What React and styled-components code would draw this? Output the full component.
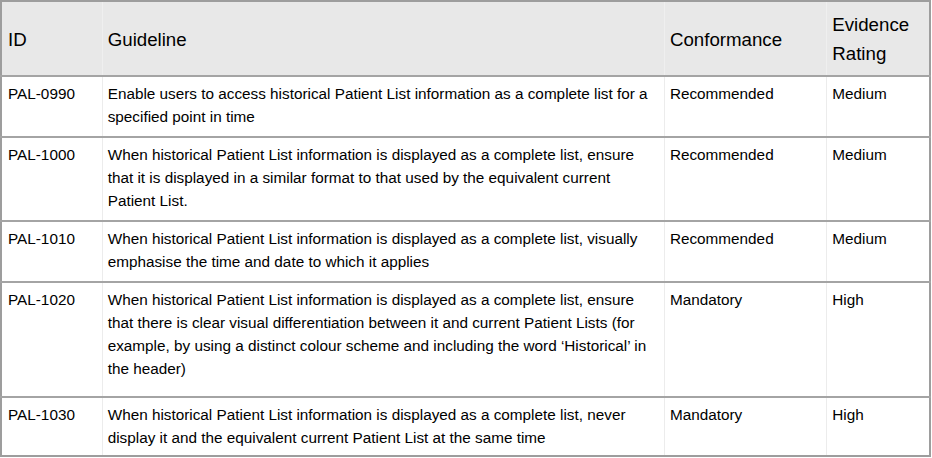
import React from "react";
import styled, { createGlobalStyle } from "styled-components";

const Global = createGlobalStyle`
  html, body { margin: 0; padding: 0; background: #ffffff; }
  body { font-family: "Liberation Sans", Arial, sans-serif; color: #000; }
`;

const Table = styled.table`
  width: 931px;
  border-collapse: collapse;
  border: 2px solid #9d9d9d;
  table-layout: fixed;
`;

const HeadCell = styled.th`
  background: #e8e8e8;
  font-weight: normal;
  font-size: 18.7px;
  line-height: 29px;
  text-align: left;
  vertical-align: middle;
  padding: 8px 6px 7px 5px;
  height: 58px;
  border-bottom: 2px solid #a4a4a4;
  border-left: 1px solid #efefef;
  &:first-child { border-left: none; padding-left: 6px; }
`;

const Cell = styled.td`
  font-size: 15.3px;
  line-height: 23px;
  vertical-align: top;
  padding: 5px 6px ${(p) => p.$pb}px 5px;
  border-top: 2px solid #a4a4a4;
  border-left: 1px solid #ececec;
  &:first-child { border-left: none; padding-left: 6px; }
`;

const Col = styled.col`
  width: ${(p) => p.$w}px;
`;

const rows = [
  {
    id: "PAL-0990",
    text: "Enable users to access historical Patient List information as a complete list for a specified point in time",
    conf: "Recommended",
    rating: "Medium",
    pb: 8,
  },
  {
    id: "PAL-1000",
    text: "When historical Patient List information is displayed as a complete list, ensure that it is displayed in a similar format to that used by the equivalent current Patient List.",
    conf: "Recommended",
    rating: "Medium",
    pb: 8,
  },
  {
    id: "PAL-1010",
    text: "When historical Patient List information is displayed as a complete list, visually emphasise the time and date to which it applies",
    conf: "Recommended",
    rating: "Medium",
    pb: 8,
  },
  {
    id: "PAL-1020",
    text: "When historical Patient List information is displayed as a complete list, ensure that there is clear visual differentiation between it and current Patient Lists (for example, by using a distinct colour scheme and including the word \u2018Historical\u2019 in the header)",
    conf: "Mandatory",
    rating: "High",
    pb: 16,
  },
  {
    id: "PAL-1030",
    text: "When historical Patient List information is displayed as a complete list, never display it and the equivalent current Patient List at the same time",
    conf: "Mandatory",
    rating: "High",
    pb: 6,
  },
];

export default function App() {
  return (
    <>
      <Global />
      <Table>
        <colgroup>
          <Col $w={101} />
          <Col $w={561} />
          <Col $w={162} />
          <Col $w={103} />
        </colgroup>
        <thead>
          <tr>
            <HeadCell>ID</HeadCell>
            <HeadCell>Guideline</HeadCell>
            <HeadCell>Conformance</HeadCell>
            <HeadCell>Evidence Rating</HeadCell>
          </tr>
        </thead>
        <tbody>
          {rows.map((r) => (
            <tr key={r.id}>
              <Cell $pb={r.pb}>{r.id}</Cell>
              <Cell $pb={r.pb}>{r.text}</Cell>
              <Cell $pb={r.pb}>{r.conf}</Cell>
              <Cell $pb={r.pb}>{r.rating}</Cell>
            </tr>
          ))}
        </tbody>
      </Table>
    </>
  );
}
